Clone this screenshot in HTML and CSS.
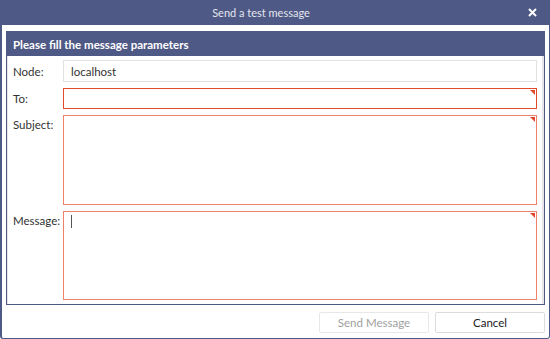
FILE: index.html
```html
<!DOCTYPE html>
<html>
<head>
<meta charset="utf-8">
<link rel="stylesheet" href="styles.css">
</head>
<body>
<div class="window">
  <div class="titlebar">
    <span class="title">Send a test message</span>
    <svg class="close" width="9" height="9" viewBox="0 0 9 9"><path d="M1 1 L8 8 M8 1 L1 8" stroke="#ffffff" stroke-width="2" fill="none"/></svg>
  </div>
  <div class="content">
    <div class="panel">
      <div class="panel-head">Please fill the message parameters</div>
      <div class="form">
        <label class="lbl">Node:</label>
        <div class="field plain">localhost</div>
        <label class="lbl">To:</label>
        <div class="field invalid strong"><span class="flag"></span></div>
        <label class="lbl top">Subject:</label>
        <div class="field invalid"><span class="flag"></span></div>
        <label class="lbl top">Message:</label>
        <div class="field invalid"><span class="caret"></span><span class="flag"></span></div>
      </div>
    </div>
    <div class="buttons">
      <button class="btn disabled">Send Message</button>
      <button class="btn">Cancel</button>
    </div>
  </div>
</div>
</body>
</html>
```
FILE: styles.css
```css
html, body {
  margin: 0;
  padding: 0;
  background: #ffffff;
}
body {
  font-family: Lato, "Open Sans", sans-serif;
  font-size: 11.5px;
  color: #333333;
}
.window {
  width: 550px;
  height: 339px;
  box-sizing: border-box;
  border: 1px solid #4f5985;
  border-left-width: 2px;
  border-radius: 0 0 3px 3px;
  display: flex;
  flex-direction: column;
}
.titlebar {
  height: 25px;
  margin: -1px -1px 0 -2px;
  padding-right: 28px;
  background: #4f5985;
  display: flex;
  align-items: center;
  justify-content: center;
  position: relative;
  color: #e4e6ef;
  font-size: 11px;
}
.close {
  position: absolute;
  right: 13px;
  top: 8px;
}
.content {
  padding: 6px 4px 0 4px;
  display: flex;
  flex-direction: column;
}
.panel {
  border: 1px solid #4f5985;
  height: 274px;
  box-sizing: border-box;
  box-shadow: inset -2px 0 0 #e6e6ea, inset 1px 0 0 #e6e6ea;
}
.panel-head {
  height: 24px;
  background: #4f5985;
  color: #ffffff;
  font-weight: bold;
  font-size: 11.5px;
  display: flex;
  align-items: center;
  padding-left: 6px;
}
.form {
  display: grid;
  grid-template-columns: 56px 474px;
  grid-template-rows: 22px 21px 90px 89px;
  row-gap: 6px;
  padding: 4px 0 0 0;
}
.lbl {
  padding-left: 6px;
  display: flex;
  align-items: center;
  color: #333333;
}
.lbl.top {
  align-items: flex-start;
  padding-top: 3px;
}
.field {
  box-sizing: border-box;
  position: relative;
  background: #ffffff;
}
.plain {
  border: 1px solid #e2e2e2;
  padding-left: 7px;
  display: flex;
  align-items: center;
  color: #333333;
}
.invalid {
  border: 1px solid #ee8268;
}
.invalid.strong {
  border-color: #e24a2c;
}
.flag {
  position: absolute;
  right: 1px;
  top: 1px;
  width: 0;
  height: 0;
  border-top: 5px solid #e24a2c;
  border-left: 5px solid transparent;
}
.caret {
  position: absolute;
  left: 7px;
  top: 3px;
  width: 1px;
  height: 13px;
  background: #555555;
}
.buttons {
  display: flex;
  justify-content: flex-end;
  gap: 6px;
  padding-top: 7px;
}
.btn {
  width: 110px;
  height: 21px;
  box-sizing: border-box;
  border: 1px solid #dcdcdc;
  border-radius: 2px;
  background: #ffffff;
  font-family: Lato, "Open Sans", sans-serif;
  font-size: 11.5px;
  color: #222222;
  padding: 0;
}
.btn.disabled {
  color: #a0a0a0;
  border-color: #e8e8e8;
}
```
